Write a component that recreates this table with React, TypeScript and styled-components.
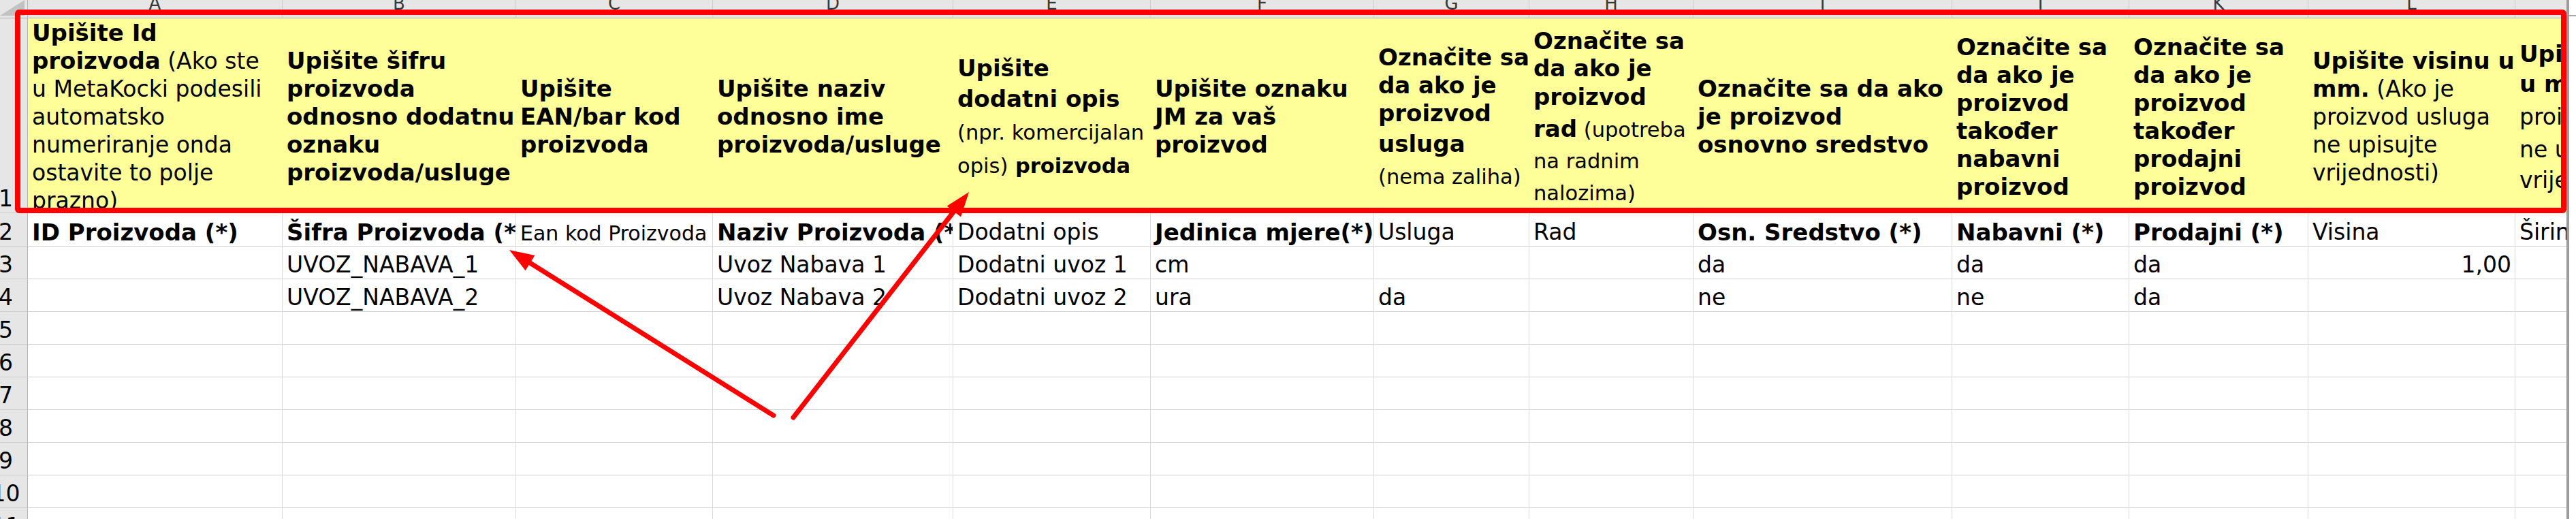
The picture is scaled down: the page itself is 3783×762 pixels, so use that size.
import React from 'react';
import styled, { createGlobalStyle } from 'styled-components';

const GlobalStyle = createGlobalStyle`
  * { box-sizing: border-box; }
  html, body { margin: 0; padding: 0; background: #fff; overflow: hidden; }
  body { font-family: "DejaVu Sans", Verdana, sans-serif; color: #000; }
`;

const COLS = [41, 374, 343, 289, 353, 290, 328, 228, 241, 380, 260, 263, 304, 320];
const LETTERS = ['A', 'B', 'C', 'D', 'E', 'F', 'G', 'H', 'I', 'J', 'K', 'L', 'M'];

type Seg = { t: string; b?: boolean; s?: boolean };
type Line = { h: number; segs: Seg[] };

const B = (t: string, h = 41): Line => ({ h, segs: [{ t, b: true }] });
const P = (t: string, h = 41): Line => ({ h, segs: [{ t }] });
const S = (t: string, h = 47): Line => ({ h, segs: [{ t, s: true }] });

const HEAD: Line[][] = [
  [
    B('Upišite Id'),
    { h: 41, segs: [{ t: 'proizvoda', b: true }, { t: ' (Ako ste' }] },
    P('u MetaKocki podesili'),
    P('automatsko'),
    P('numeriranje onda'),
    P('ostavite to polje'),
    P('prazno)'),
  ],
  [B('Upišite šifru'), B('proizvoda'), B('odnosno dodatnu'), B('oznaku'), B('proizvoda/usluge')],
  [B('Upišite'), B('EAN/bar kod'), B('proizvoda')],
  [B('Upišite naziv'), B('odnosno ime'), B('proizvoda/usluge')],
  [
    B('Upišite'),
    B('dodatni opis', 45),
    S('(npr. komercijalan', 48),
    { h: 49, segs: [{ t: 'opis)', s: true }, { t: ' proizvoda', s: true, b: true }] },
  ],
  [B('Upišite oznaku'), B('JM za vaš'), B('proizvod')],
  [B('Označite sa'), B('da ako je'), B('proizvod'), B('usluga', 45), S('(nema zaliha)', 47)],
  [
    B('Označite sa'),
    B('da ako je', 40),
    B('proizvod', 42),
    { h: 47, segs: [{ t: 'rad', b: true }, { t: ' (upotreba', s: true }] },
    S('na radnim', 46),
    S('nalozima)', 47),
  ],
  [B('Označite sa da ako'), B('je proizvod'), B('osnovno sredstvo')],
  [B('Označite sa'), B('da ako je'), B('proizvod'), B('također'), B('nabavni'), B('proizvod')],
  [B('Označite sa'), B('da ako je'), B('proizvod'), B('također'), B('prodajni'), B('proizvod')],
  [
    B('Upišite visinu u'),
    { h: 41, segs: [{ t: 'mm.', b: true }, { t: ' (Ako je' }] },
    P('proizvod usluga'),
    P('ne upisujte'),
    P('vrijednosti)'),
  ],
  [
    B('Upišite širinu'),
    { h: 44, segs: [{ t: 'u mm.', b: true }, { t: ' (Ako je' }] },
    P('proizvod usluga', 48),
    P('ne upisujte', 48),
    P('vrijednosti)', 45),
  ],
];

type Kind = 'bold' | 'plain' | 'note';
type Data = { t: string; k?: Kind; right?: boolean } | null;

const ROWS: Data[][] = [
  [
    { t: 'ID Proizvoda (*)', k: 'bold' },
    { t: 'Šifra Proizvoda (*)', k: 'bold' },
    { t: 'Ean kod Proizvoda', k: 'note' },
    { t: 'Naziv Proizvoda (*)', k: 'bold' },
    { t: 'Dodatni opis' },
    { t: 'Jedinica mjere(*)', k: 'bold' },
    { t: 'Usluga' },
    { t: 'Rad' },
    { t: 'Osn. Sredstvo (*)', k: 'bold' },
    { t: 'Nabavni (*)', k: 'bold' },
    { t: 'Prodajni (*)', k: 'bold' },
    { t: 'Visina' },
    { t: 'Širina' },
  ],
  [
    null,
    { t: 'UVOZ_NABAVA_1' },
    null,
    { t: 'Uvoz Nabava 1' },
    { t: 'Dodatni uvoz 1' },
    { t: 'cm' },
    null,
    null,
    { t: 'da' },
    { t: 'da' },
    { t: 'da' },
    { t: '1,00', right: true },
    null,
  ],
  [
    null,
    { t: 'UVOZ_NABAVA_2' },
    null,
    { t: 'Uvoz Nabava 2' },
    { t: 'Dodatni uvoz 2' },
    { t: 'ura' },
    { t: 'da' },
    null,
    { t: 'ne' },
    { t: 'ne' },
    { t: 'da' },
    null,
    null,
  ],
];

const Page = styled.div`
  position: relative;
  width: 3783px;
  height: 762px;
  display: flex;
  overflow: hidden;
`;

const Sheet = styled.div`
  flex: 0 0 3769px;
  display: grid;
  grid-template-columns: ${COLS.map((c) => `${c}px`).join(' ')};
  grid-template-rows: 27px 286px 49px repeat(9, 48px);
  align-content: start;
  overflow: hidden;
`;

const Edge = styled.div`
  flex: 1;
  border-left: 4px solid #9c9c9c;
  background: #fff;
`;

const EdgeCap = styled.div`
  height: 24px;
  border-bottom: 2px solid #a6a6a6;
`;

const Corner = styled.div`
  background: #e6e6e6;
  border-right: 1px solid #b4b4b4;
  border-bottom: 1px solid #b4b4b4;
  display: flex;
  align-items: flex-start;
`;

const ColHead = styled.div`
  background: #e6e6e6;
  border-right: 1px solid #cdcdcd;
  border-bottom: 1px solid #b4b4b4;
  color: #3a3a3a;
  font-size: 26px;
  line-height: 10px;
  text-align: center;
  overflow: hidden;
`;

const RowHead = styled.div`
  background: #e6e6e6;
  border-right: 1px solid #b4b4b4;
  border-bottom: 1px solid #cdcdcd;
  display: flex;
  align-items: flex-end;
  font-size: 33px;
  line-height: 38px;
  padding-bottom: 1px;
  overflow: hidden;
`;

const RowNum = styled.div`
  width: 17px;
  display: flex;
  justify-content: center;
  white-space: nowrap;
`;

const HeadCell = styled.div`
  background: #ffff99;
  border-bottom: 1px solid #d0d0d0;
  display: flex;
  flex-direction: column;
  justify-content: center;
  padding-left: 6px;
  overflow: hidden;
`;

const HeadLine = styled.div<{ $h: number }>`
  flex-shrink: 0;
  height: ${(p) => p.$h}px;
  padding-top: ${(p) => p.$h - 38}px;
  font-size: 34px;
  line-height: 38px;
  white-space: pre;
`;

const Part = styled.span<{ $b?: boolean; $s?: boolean }>`
  font-weight: ${(p) => (p.$b ? 700 : 400)};
  font-size: ${(p) => (p.$s ? 30.5 : p.$b ? 34 : 33)}px;
`;

const Cell = styled.div<{ $kind: Kind; $right?: boolean }>`
  border-right: 1px solid #dedede;
  border-bottom: 1px solid #d0d0d0;
  display: flex;
  align-items: flex-end;
  justify-content: ${(p) => (p.$right ? 'flex-end' : 'flex-start')};
  padding: 0 5px 1px 6px;
  white-space: pre;
  overflow: hidden;
  font-weight: ${(p) => (p.$kind === 'bold' ? 700 : 400)};
  font-size: ${(p) => (p.$kind === 'bold' ? 34 : p.$kind === 'note' ? 30 : 33)}px;
  line-height: ${(p) => (p.$kind === 'note' ? 35 : 38)}px;
`;

const Frame = styled.div`
  position: absolute;
  left: 22px;
  top: 14px;
  width: 3747px;
  height: 299px;
  border: 8px solid #ff0000;
  border-radius: 6px;
  pointer-events: none;
`;

const Overlay = styled.svg`
  position: absolute;
  left: 0;
  top: 0;
  pointer-events: none;
`;

function Arrow({ x1, y1, x2, y2 }: { x1: number; y1: number; x2: number; y2: number }) {
  const len = Math.hypot(x2 - x1, y2 - y1);
  const ux = (x2 - x1) / len;
  const uy = (y2 - y1) / len;
  const bx = x2 - ux * 36;
  const by = y2 - uy * 36;
  const nx = -uy * 13;
  const ny = ux * 13;
  return (
    <g>
      <line x1={x1} y1={y1} x2={bx + ux * 4} y2={by + uy * 4} stroke="#ff0000" strokeWidth={7} strokeLinecap="round" />
      <polygon points={`${x2},${y2} ${bx + nx},${by + ny} ${bx - nx},${by - ny}`} fill="#ff0000" />
    </g>
  );
}

export default function App() {
  const emptyRows = [5, 6, 7, 8, 9, 10, 11];
  return (
    <>
      <GlobalStyle />
      <Page>
        <Sheet>
          <Corner>
            <svg width="36" height="23">
              <polygon points="0,23 36,0 36,23" fill="#c2c2c2" />
            </svg>
          </Corner>
          {LETTERS.map((l) => (
            <ColHead key={l}>{l}</ColHead>
          ))}

          <RowHead>
            <RowNum>1</RowNum>
          </RowHead>
          {HEAD.map((lines, i) => (
            <HeadCell key={i}>
              {lines.map((ln, j) => (
                <HeadLine key={j} $h={ln.h}>
                  {ln.segs.map((s, k) => (
                    <Part key={k} $b={s.b} $s={s.s}>
                      {s.t}
                    </Part>
                  ))}
                </HeadLine>
              ))}
            </HeadCell>
          ))}

          {ROWS.map((row, r) => (
            <React.Fragment key={r}>
              <RowHead>
                <RowNum>{r + 2}</RowNum>
              </RowHead>
              {row.map((c, i) => (
                <Cell key={i} $kind={c?.k ?? 'plain'} $right={c?.right}>
                  {c?.t}
                </Cell>
              ))}
            </React.Fragment>
          ))}

          {emptyRows.map((n) => (
            <React.Fragment key={n}>
              <RowHead>
                <RowNum>{n}</RowNum>
              </RowHead>
              {LETTERS.map((l) => (
                <Cell key={l} $kind="plain" />
              ))}
            </React.Fragment>
          ))}
        </Sheet>
        <Edge>
          <EdgeCap />
        </Edge>

        <Frame />
        <Overlay width={3783} height={762}>
          <Arrow x1={1136} y1={610} x2={748} y2={367} />
          <Arrow x1={1165} y1={613} x2={1423} y2={282} />
        </Overlay>
      </Page>
    </>
  );
}
